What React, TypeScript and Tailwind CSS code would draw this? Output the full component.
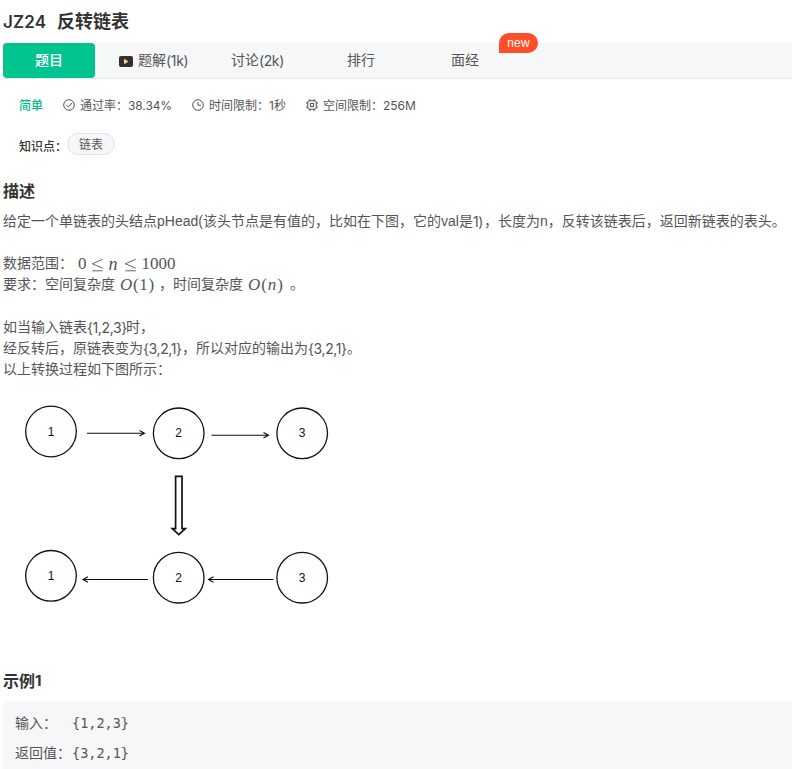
import type { ReactNode } from 'react';

const sans = "font-['Liberation_Sans','Noto_Sans_CJK_SC',sans-serif]";
const inter = "font-['Inter','Noto_Sans_CJK_SC',sans-serif]";

function Node({ x, y, label }: { x: number; y: number; label: string }) {
  return (
    <g>
      <circle cx={x} cy={y} r="25.3" fill="none" stroke="#111" strokeWidth="1.3" />
      <text x={x} y={y + 4} textAnchor="middle" fontSize="12" fill="#111">
        {label}
      </text>
    </g>
  );
}

function Arrow({ from, to, y }: { from: number; to: number; y: number }) {
  const back = to > from ? -5 : 5;
  return (
    <path
      d={`M${from} ${y}H${to}M${to + back} ${y - 2.7}L${to} ${y}L${to + back} ${y + 2.7}`}
      fill="none"
      stroke="#111"
      strokeWidth="1.1"
    />
  );
}

function Diagram() {
  return (
    <svg width="340" height="240" viewBox="0 379 340 240" className="-ml-[3px] block">
      <Node x={51} y={431.5} label="1" />
      <Node x={178.7} y={433.3} label="2" />
      <Node x={302.2} y={433.3} label="3" />
      <Arrow from={87} to={144.5} y={433.3} />
      <Arrow from={211.5} to={268.5} y={435.3} />
      <path
        d="M175.6 476.3H182V528.7H185.3L178.8 534.6L172.3 528.7H175.6Z"
        fill="none"
        stroke="#111"
        strokeWidth="1.7"
      />
      <Node x={51} y={575.8} label="1" />
      <Node x={178.7} y={577.7} label="2" />
      <Node x={302.2} y={577.7} label="3" />
      <Arrow from={148} to={83} y={579.5} />
      <Arrow from={273.5} to={208.5} y={579.5} />
    </svg>
  );
}

function Tab({ className, children }: { className: string; children: ReactNode }) {
  return <div className={`flex h-[35px] shrink-0 items-center ${className}`}>{children}</div>;
}

function LessEqual() {
  return (
    <svg width="13" height="14" viewBox="0 0 13 14" className="mr-[5px] ml-[4px] block translate-y-px" fill="none" stroke="#555" strokeWidth="0.9">
      <path d="M11.8 1.2L1.3 5.8L11.8 10.2M1.3 12.8H11.8" />
    </svg>
  );
}

const icon = 'mr-[5px] block size-3 shrink-0 -translate-y-px';
const math = "font-['Liberation_Serif',serif] text-[17px]";

export default function App() {
  return (
    <div className={`h-[769px] w-full overflow-hidden bg-white pl-[3px] text-sm leading-[21px] text-[#555] ${sans}`}>
      <h1 className="flex h-[43px] items-center text-lg font-bold text-[#333]">
        <span className={`w-[54px] translate-y-px text-[17px] font-semibold tracking-[0.2px] ${inter}`}>JZ24</span>
        <span>反转链表</span>
      </h1>

      <nav className="relative flex h-9 border-b border-[#e6e9ec] bg-[#f6f7f9]">
        <Tab className="w-[92px] justify-center rounded bg-[#00c48f] font-medium text-white">题目</Tab>
        <Tab className="w-[136px] pl-6">
          <svg width="14" height="12" viewBox="0 0 14 12" className="mr-[5px] block translate-y-px">
            <rect width="14" height="11" rx="2" fill="#35302f" />
            <path d="M5.5 3.4L8.8 5.5L5.5 7.6Z" fill="#f4d28c" stroke="#f4d28c" strokeLinejoin="round" />
          </svg>
          <span>题解</span>
          <span className={`tracking-[-0.3px] ${inter}`}>(1k)</span>
        </Tab>
        <Tab className="w-[116px]">
          <span>讨论</span>
          <span className={`tracking-[-0.4px] ${inter}`}>(2k)</span>
        </Tab>
        <Tab className="w-[104px]">排行</Tab>
        <Tab className="w-7">面经</Tab>
        <span className="absolute -top-2.5 left-[496px] flex h-5 w-[39px] items-center justify-center rounded-[10px] rounded-bl-none bg-[#ff4d29] text-xs tracking-[0.2px] text-white">
          new
        </span>
      </nav>

      <div className="flex h-[53px] items-center pl-4 text-xs">
        <span className="w-11 font-medium text-[#00b88a]">简单</span>
        <svg viewBox="0 0 12 12" className={icon} fill="none" stroke="#555">
          <circle cx="6" cy="6" r="5.3" />
          <path d="M3.2 6.1L5.3 7.9L9 4" />
        </svg>
        <span className="w-12">通过率：</span>
        <span className={`w-16 tracking-[-0.1px] ${inter}`}>38.34%</span>
        <svg viewBox="0 0 12 12" className={icon} fill="none" stroke="#555">
          <circle cx="6" cy="6" r="5.3" />
          <path d="M6 3V6.3H9" />
        </svg>
        <span className="w-[60px]">时间限制：</span>
        <span className={`w-[37px] ${inter}`}>1秒</span>
        <svg viewBox="0 0 12 12" className={icon} fill="none" stroke="#555">
          <rect x="1.8" y="1.8" width="8.4" height="8.4" rx="1.2" />
          <rect x="4.4" y="4.4" width="3.2" height="3.2" />
          <path d="M4 0V2M8 0V2M4 10V12M8 10V12M0 4H2M0 8H2M10 4H12M10 8H12" />
        </svg>
        <span className="w-[60px]">空间限制：</span>
        <span className={inter}>256M</span>
      </div>

      <div className="flex h-6 pl-4 text-xs">
        <span className="w-12 pt-[7px] font-medium text-[#333]">知识点：</span>
        <span className="mt-px flex h-[22px] w-12 items-center justify-center rounded-full border border-[#dfe2e6] bg-[#f6f7f9] pt-px">
          链表
        </span>
      </div>

      <h2 className="mt-[25px] flex h-[21px] items-center text-base font-bold text-[#333]">描述</h2>

      <div className="mt-[9px] whitespace-nowrap">
        <p className="flex">
          <span>给定一个单链表的头结点</span>
          <span className="w-[46px]">pHead(</span>
          <span>该头节点是有值的，比如在下图，</span>
          <span>它的val是</span>
          <span className={`w-[11px] tracking-[-0.4px] ${inter}`}>1)</span>
          <span>，长度为n，反转该链表后，返回新链表的表头。</span>
        </p>
        <p className="mt-[21px] flex h-[21px] items-center">
          <span className="w-[75px]">数据范围：</span>
          <span className={`flex items-center ${math}`}>
            0 <LessEqual />
            <i className="w-[11px] text-lg">n</i>
            <LessEqual /> 1000
          </span>
        </p>
        <p className="flex h-[21px] items-center">
          <span className="w-[117px]">要求：空间复杂度</span>
          <span className={`w-[36px] tracking-[0.7px] ${math}`}>
            <i>O</i>(1)
          </span>
          <span className="w-[92px] pl-[3px]">，时间复杂度</span>
          <span className={`w-[42px] tracking-[0.9px] ${math}`}>
            <i>O</i>(<i>n</i>)
          </span>
          <span>。</span>
        </p>
        <p className="mt-[22px] flex">
          <span>如当输入链表</span>
          <span className={`w-[39px] tracking-[-0.4px] ${inter}`}>{'{1,2,3}'}</span>
          <span>时，</span>
        </p>
        <p className="flex">
          <span>经反转后，原链表变为</span>
          <span className={`w-[39px] tracking-[-0.4px] ${inter}`}>{'{3,2,1}'}</span>
          <span>，所以对应的输出为</span>
          <span className={`w-[39px] tracking-[-0.4px] ${inter}`}>{'{3,2,1}'}</span>
          <span>。</span>
        </p>
        <p>以上转换过程如下图所示：</p>
      </div>

      <div className="-mt-px">
        <Diagram />
      </div>

      <h2 className="mt-[52px] flex h-[21px] items-center text-base font-bold text-[#333]">
        示例<span className={`text-[15px] ${inter}`}>1</span>
      </h2>

      <div className="mt-[9px] h-[80px] rounded-tl bg-[#f6f7f9] pt-[7px] pl-3">
        <div className="flex h-[30px] items-center">
          <span className="w-[57px]">输入：</span>
          <span className="font-['DejaVu_Sans_Mono',monospace] text-[13.5px]">{'{1,2,3}'}</span>
        </div>
        <div className="flex h-[30px] items-center">
          <span className="w-[57px]">返回值：</span>
          <span className="font-['DejaVu_Sans_Mono',monospace] text-[13.5px]">{'{3,2,1}'}</span>
        </div>
      </div>
    </div>
  );
}
